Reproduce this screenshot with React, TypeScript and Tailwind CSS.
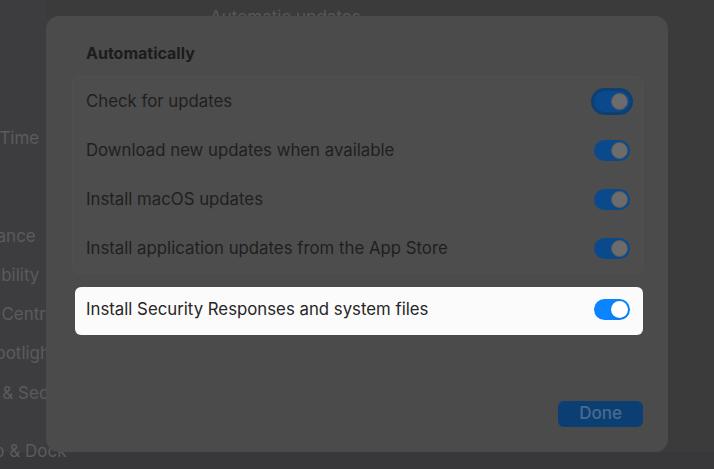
import React from 'react'

const sidebarItems = [
  { label: 'Screen Time', top: 127 },
  { label: 'General', top: 181 },
  { label: 'Appearance', top: 225 },
  { label: 'Accessibility', top: 264 },
  { label: 'Control Centre', top: 303 },
  { label: 'Siri & Spotlight', top: 342 },
  { label: 'Privacy & Security', top: 382 },
  { label: 'Desktop & Dock', top: 440 },
]

const rows = [
  { label: 'Check for updates', focused: true },
  { label: 'Download new updates when available' },
  { label: 'Install macOS updates' },
  { label: 'Install application updates from the App Store' },
]

function Toggle({ bright, focused }: { bright?: boolean; focused?: boolean }) {
  return (
    <div
      className={
        'flex h-[21px] w-[36px] items-center justify-end rounded-full pr-[2px] ' +
        (bright ? 'bg-[#0a84ff]' : 'bg-[#0a4a8c]') +
        (focused ? ' ring-[3px] ring-[#0d3f72]' : '')
      }
    >
      <div
        className={
          'h-[17px] w-[17px] rounded-full ' +
          (bright ? 'bg-white shadow-sm' : 'bg-[#6c6c6c] border border-[#5a5a5a]')
        }
      />
    </div>
  )
}

export default function App() {
  return (
    <div
      className="relative h-[469px] w-[714px] overflow-hidden bg-[#3b3b3c]"
      style={{ fontFamily: 'Inter, "Noto Sans", sans-serif' }}
    >
      {/* window behind the sheet */}
      <div className="flex h-[452px]">
        <div className="relative w-[46px] shrink-0 bg-[#3d3d3f] text-[17px] text-[#5b5b5c]">
          {sidebarItems.map((item) => (
            <div
              key={item.label}
              className="absolute left-[-62px] whitespace-nowrap leading-[22px]"
              style={{ top: item.top }}
            >
              {item.label}
            </div>
          ))}
        </div>
        <div className="flex-1 bg-[#3b3b3b] pl-[164px] pt-[5px] text-[17px] text-[#575757]">
          Automatic updates
        </div>
      </div>
      <div className="h-[17px] bg-[#38383a]" />

      {/* sheet */}
      <div className="absolute left-[46px] top-[16px] flex h-[436px] w-[622px] flex-col rounded-[13px] bg-[#4b4b4b]">
        <div className="px-[40px] pt-[27px] text-[16px] font-bold leading-[20px] text-[#1c1c1c]">
          Automatically
        </div>

        <div className="ml-[26px] mr-[25px] mt-[13px] rounded-[6px] border border-[#505050] bg-[#4d4d4d]">
          {rows.map((row) => (
            <div
              key={row.label}
              className="flex h-[49px] items-center justify-between pl-[13px] pr-[12px] text-[16.8px] text-[#1f1f1f]"
            >
              <span>{row.label}</span>
              <Toggle focused={row.focused} />
            </div>
          ))}
        </div>

        <div className="ml-[29px] mr-[25px] mt-[13px] flex h-[48px] items-center justify-between rounded-[6px] bg-[#fbfbfb] pb-[3px] pl-[11px] pr-[13px] text-[16.8px] text-[#262626]">
          <span>Install Security Responses and system files</span>
          <Toggle bright />
        </div>

        <div className="mr-[25px] mt-[66px] flex h-[26px] w-[85px] items-center justify-center self-end rounded-[6px] bg-[#0b3f74] text-[17px] font-medium text-[#4a6a8c]">
          Done
        </div>
      </div>
    </div>
  )
}
